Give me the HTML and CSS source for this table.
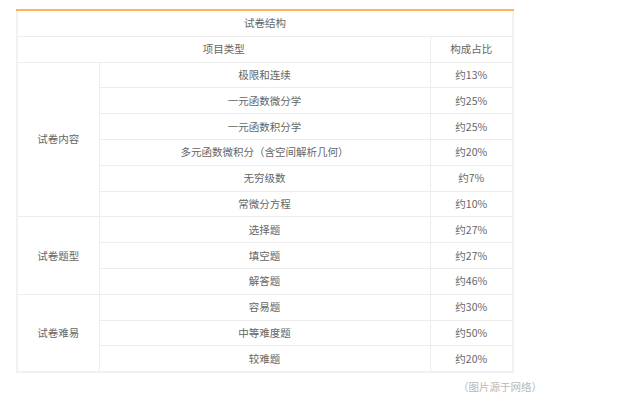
FILE: index.html
```html
<!DOCTYPE html>
<html lang="zh-CN">
<head>
<meta charset="utf-8">
<title>试卷结构</title>
<link rel="stylesheet" href="styles.css">
</head>
<body>
<div class="page">
  <table class="exam">
    <colgroup>
      <col class="col-group">
      <col class="col-item">
      <col class="col-ratio">
    </colgroup>
    <tr><td colspan="3" class="title">试卷结构</td></tr>
    <tr><td colspan="2">项目类型</td><td>构成占比</td></tr>
    <tr><td rowspan="6">试卷内容</td><td>极限和连续</td><td>约13%</td></tr>
    <tr><td>一元函数微分学</td><td>约25%</td></tr>
    <tr><td>一元函数积分学</td><td>约25%</td></tr>
    <tr><td>多元函数微积分（含空间解析几何）</td><td>约20%</td></tr>
    <tr><td>无穷级数</td><td>约7%</td></tr>
    <tr><td>常微分方程</td><td>约10%</td></tr>
    <tr><td rowspan="3">试卷题型</td><td>选择题</td><td>约27%</td></tr>
    <tr><td>填空题</td><td>约27%</td></tr>
    <tr><td>解答题</td><td>约46%</td></tr>
    <tr><td rowspan="3">试卷难易</td><td>容易题</td><td>约30%</td></tr>
    <tr><td>中等难度题</td><td>约50%</td></tr>
    <tr><td>较难题</td><td>约20%</td></tr>
  </table>
  <div class="caption">（图片源于网络）</div>
</div>
</body>
</html>
```
FILE: styles.css
```css
html, body {
  margin: 0;
  padding: 0;
  background: #ffffff;
}
.page {
  padding: 9px 0 0 16px;
  font-family: "Noto Sans CJK SC", "Noto Sans", sans-serif;
  font-size: 10.5px;
  color: #666666;
}
.exam {
  width: 496px;
  border-collapse: collapse;
  border: 2px solid #f1f1f1;
  border-top: 2px solid #ffb45c;
  table-layout: fixed;
}
.col-group {
  width: 82px;
}
.col-item {
  width: 331px;
}
.col-ratio {
  width: 83px;
}
.exam td {
  border: 1px solid #ededed;
  height: 24.8px;
  padding: 0;
  text-align: center;
  vertical-align: middle;
  line-height: 14px;
  white-space: nowrap;
}
.exam tr:first-child td {
  border-top: 2px solid #ffb45c;
}
.caption {
  margin: 7px 0 0 442px;
  font-size: 10.5px;
  line-height: 14px;
  color: #b8b8b8;
}
```
